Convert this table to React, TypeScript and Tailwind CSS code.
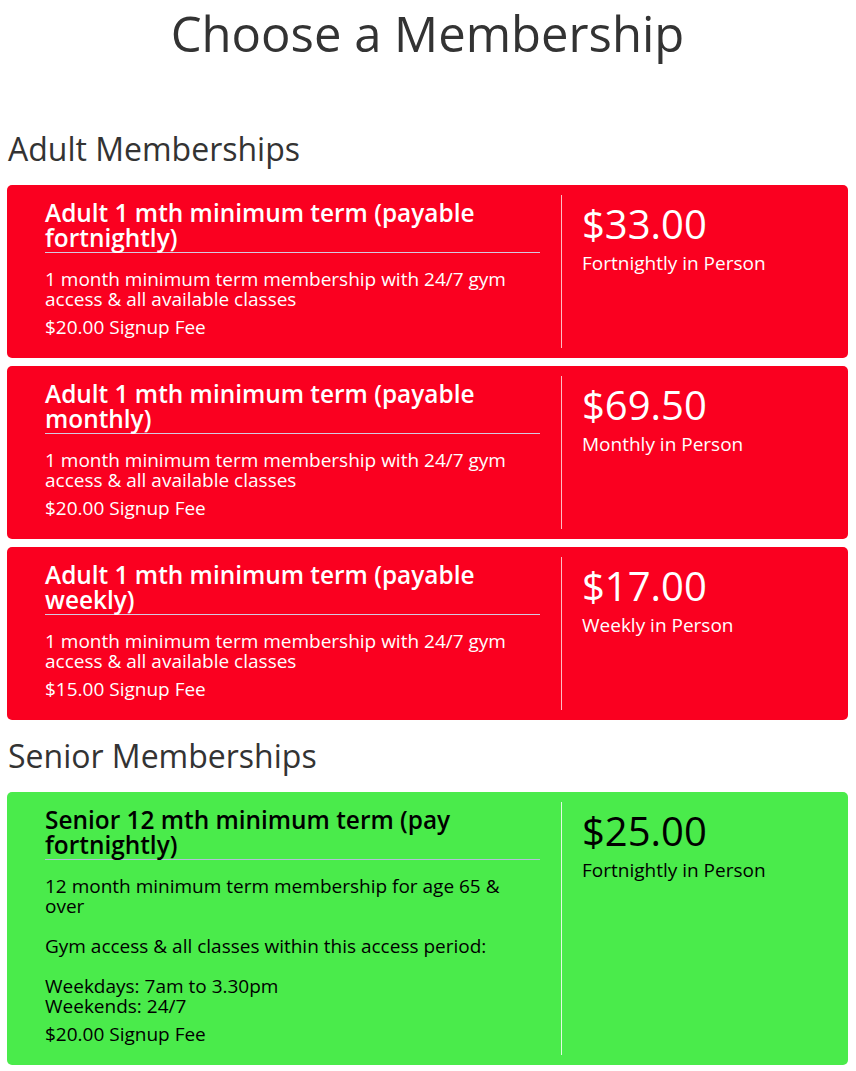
const adult = [
  {
    title: "Adult 1 mth minimum term (payable fortnightly)",
    desc: ["1 month minimum term membership with 24/7 gym access & all available classes"],
    fee: "$20.00 Signup Fee",
    price: "$33.00",
    period: "Fortnightly in Person",
  },
  {
    title: "Adult 1 mth minimum term (payable monthly)",
    desc: ["1 month minimum term membership with 24/7 gym access & all available classes"],
    fee: "$20.00 Signup Fee",
    price: "$69.50",
    period: "Monthly in Person",
  },
  {
    title: "Adult 1 mth minimum term (payable weekly)",
    desc: ["1 month minimum term membership with 24/7 gym access & all available classes"],
    fee: "$15.00 Signup Fee",
    price: "$17.00",
    period: "Weekly in Person",
  },
];

const senior = [
  {
    title: "Senior 12 mth minimum term (pay fortnightly)",
    desc: [
      "12 month minimum term membership for age 65 & over",
      "",
      "Gym access & all classes within this access period:",
      "",
      "Weekdays: 7am to 3.30pm",
      "Weekends: 24/7",
    ],
    fee: "$20.00 Signup Fee",
    price: "$25.00",
    period: "Fortnightly in Person",
  },
];

type Plan = (typeof adult)[number];

function PlanCard({ plan, green }: { plan: Plan; green?: boolean }) {
  return (
    <div
      className={
        green
          ? "flex rounded-[5px] py-[10px] bg-[#4aeb4b] text-[#000]"
          : "flex rounded-[5px] py-[10px] bg-[#fa0020] text-white"
      }
    >
      <div className="w-[554px] shrink-0 pl-[38px] pr-[21px]">
        <h3
          className={
            green
              ? "text-[24.4px] leading-[25px] font-semibold pt-[5px] pb-[2px] border-b border-[#b4bfd9]"
              : "text-[24.4px] leading-[25px] font-semibold pt-[5px] pb-[2px] border-b border-[#d6c8e0]"
          }
        >
          {plan.title}
        </h3>
        <p className="text-[19px] leading-[20px] mt-[16px]">
          {plan.desc.map((line, i) => (
            <span key={i}>
              {line}
              {i < plan.desc.length - 1 && <br />}
            </span>
          ))}
        </p>
        <p className="text-[19px] leading-[20px] mt-[8px] pb-[11px]">{plan.fee}</p>
      </div>
      <div className={green ? "w-px bg-[#e2fbe2]" : "w-px bg-[#fdbcc4]"} />
      <div className="pl-[20px] pt-[5px]">
        <div className="text-[40px] leading-[48px]">{plan.price}</div>
        <div className="text-[19px] leading-[22px] mt-[4px]">{plan.period}</div>
      </div>
    </div>
  );
}

export default function App() {
  return (
    <div
      className="bg-white text-[#333] pl-[7px] pr-[8px] pb-[6px]"
      style={{ fontFamily: '"Open Sans", sans-serif' }}
    >
      <h1 className="text-center text-[49px] leading-[60px] pt-[3px]">Choose a Membership</h1>
      <h2 className="text-[32px] leading-[40px] mt-[66px] mb-[16px] pl-[1px]">Adult Memberships</h2>
      <div className="flex flex-col gap-[8px]">
        {adult.map((p) => (
          <PlanCard key={p.title} plan={p} />
        ))}
      </div>
      <h2 className="text-[32px] leading-[40px] mt-[16px] mb-[16px] pl-[1px]">Senior Memberships</h2>
      <div className="flex flex-col gap-[8px]">
        {senior.map((p) => (
          <PlanCard key={p.title} plan={p} green />
        ))}
      </div>
    </div>
  );
}
